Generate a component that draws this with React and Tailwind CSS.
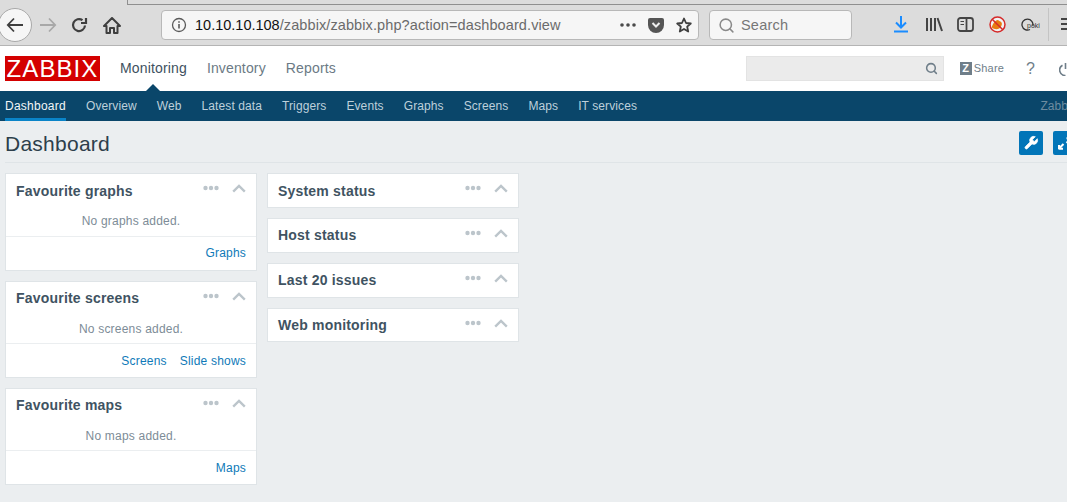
import React from "react";
import { Search } from "lucide-react";

const sans = "font-['Liberation_Sans',Arial,sans-serif]";

function Dots() {
  return (
    <svg width="16" height="6" viewBox="0 0 16 6" className="block">
      <circle cx="2.5" cy="3" r="2.2" fill="#bcc5cb" />
      <circle cx="8" cy="3" r="2.2" fill="#bcc5cb" />
      <circle cx="13.5" cy="3" r="2.2" fill="#bcc5cb" />
    </svg>
  );
}

function Chevron() {
  return (
    <svg width="14" height="9" viewBox="0 0 14 9" className="block">
      <path d="M1.2 7.6 7 2l5.8 5.6" fill="none" stroke="#bcc5cb" strokeWidth="2.4" />
    </svg>
  );
}

function WidgetHead({ title, first, last }) {
  return (
    <div className={`flex items-start justify-between pl-[10px] pr-[10px] ${last ? "h-[32px]" : "h-[33px]"}`}>
      <span className={`${first ? "mt-[9px]" : "mt-[8px]"} text-[14px] leading-[16px] font-bold tracking-[0.2px] text-[#3f5362]`}>{title}</span>
      <span className="mt-[11px] flex items-start gap-[13px]">
        <Dots />
        <span className="-mt-[1px]"><Chevron /></span>
      </span>
    </div>
  );
}

function Widget({ title, empty, links, first, last }) {
  return (
    <section className="border border-[#dfe4e7] bg-white">
      <WidgetHead title={title} first={first} last={last} />
      {empty && (
        <>
          <div className={`flex items-center justify-center text-[12px] tracking-[0.2px] text-[#7d8c97] ${first ? "h-[29px] pb-[2px]" : "h-[28px]"}`}>{empty}</div>
          <div className={`flex h-[34px] items-center justify-end gap-[13px] border-t border-[#ebeef0] pr-[10px] text-[12px] tracking-[0.2px] text-[#0f7ab8] ${first ? "pb-[2px]" : ""}`}>
            {links.map((l) => <span key={l}>{l}</span>)}
          </div>
        </>
      )}
    </section>
  );
}

function BrowserBar() {
  return (
    <div className="flex h-[46px] shrink-0 flex-col border-b border-[#b4b4b4] bg-[#dcdcdc]">
      <div className="ml-[127px] h-[5px] shrink-0 border-b border-l border-[#8f8f8f]" />
      <div className="flex h-[40px] items-start">
        <div className="z-10 -ml-[2px] mt-[3px] flex h-[34px] w-[34px] shrink-0 items-center justify-center rounded-full border border-[#a9a9a9] bg-[#f6f6f6]">
          <svg width="18" height="16" viewBox="0 0 18 16"><path d="M8 1.500 1.800 8 8 14.500M2 8h15" fill="none" stroke="#3f3f3f" strokeWidth="1.800" /></svg>
        </div>
        <svg className="ml-[7px] mt-[12px] shrink-0" width="18" height="16" viewBox="0 0 18 16"><path d="M10 1.500 16.200 8 10 14.500M16 8H1" fill="none" stroke="#a8a8a8" strokeWidth="1.800" /></svg>
        <svg className="ml-[14px] mt-[12px] shrink-0" width="17" height="16" viewBox="0 0 17 16"><path d="M14 8.500A6 6 0 1 1 11.500 3.200M15 1v5h-5" fill="none" stroke="#3f3f3f" strokeWidth="2.200" /></svg>
        <svg className="ml-[15px] mt-[12px] shrink-0" width="18" height="17" viewBox="0 0 18 17"><path d="M9 1 1 9h2.500v7H7v-5h4v5h3.500V9H17z" fill="none" stroke="#3f3f3f" strokeWidth="2" strokeLinejoin="round" /></svg>
        <div className="ml-[40px] mt-[5px] flex h-[30px] w-[538px] shrink-0 items-center rounded-[4px] border border-[#b8b8b8] bg-[#f6f6f6] pl-[9px] pr-[6px]">
          <svg width="16" height="16" viewBox="0 0 16 16" className="shrink-0"><circle cx="8" cy="8" r="6.500" fill="none" stroke="#5a5a5a" strokeWidth="1.300" /><path d="M8 7v4.500M8 4.300v1.500" stroke="#5a5a5a" strokeWidth="1.600" /></svg>
          <span className="ml-[8px] mt-[2px] text-[14.5px] tracking-[0.1px] whitespace-nowrap text-[#6b6b6b]"><span className="tracking-[0px] text-[#111]">10.10.10.108</span>/zabbix/zabbix.php?action=dashboard.view</span>
          <svg className="ml-auto shrink-0" width="16" height="4" viewBox="0 0 16 4"><circle cx="2" cy="2" r="1.800" fill="#4a4a4a" /><circle cx="8" cy="2" r="1.800" fill="#4a4a4a" /><circle cx="14" cy="2" r="1.800" fill="#4a4a4a" /></svg>
          <svg className="ml-[12px] shrink-0" width="16" height="15" viewBox="0 0 16 15"><path d="M2 0h12a2 2 0 0 1 2 2v5A8 8 0 0 1 0 7V2a2 2 0 0 1 2-2z" fill="#555" /><path d="M4.500 5 8 8.500 11.500 5" fill="none" stroke="#eee" strokeWidth="2" /></svg>
          <svg className="ml-[12px] shrink-0" width="16" height="16" viewBox="0 0 16 16"><path d="M8 1.500 10 6l4.800.5-3.600 3.200 1 4.800L8 12l-4.200 2.500 1-4.800L1.200 6.500 6 6z" fill="none" stroke="#3f3f3f" strokeWidth="1.800" strokeLinejoin="round" /></svg>
        </div>
        <div className="ml-[10px] mt-[5px] flex h-[30px] w-[143px] shrink-0 items-center rounded-[4px] border border-[#b8b8b8] bg-[#f6f6f6] pl-[8px]">
          <Search size={17} strokeWidth={2.2} color="#8a8a8a" className="shrink-0" />
          <span className="ml-[6px] mt-[2px] text-[14.5px] tracking-[0.2px] text-[#777]">Search</span>
        </div>
        <svg className="ml-[42px] mt-[11px] shrink-0" width="14" height="17" viewBox="0 0 14 17"><path d="M7 0v11M2 6.500l5 5 5-5" fill="none" stroke="#1a8cff" strokeWidth="2" /><path d="M0 15.500h14" stroke="#1a8cff" strokeWidth="2" /></svg>
        <svg className="ml-[18px] mt-[12px] shrink-0" width="17" height="15" viewBox="0 0 17 15"><path d="M1 1v13M5 1v13M9 1v13M11.500 1l4.500 13" stroke="#444" strokeWidth="2" fill="none" /></svg>
        <svg className="ml-[14px] mt-[12px] shrink-0" width="17" height="15" viewBox="0 0 17 15"><rect x="1" y="1" width="15" height="13" rx="2.500" fill="none" stroke="#444" strokeWidth="1.800" /><path d="M9.500 1v13" stroke="#444" strokeWidth="1.800" /><path d="M3.500 4.500h3.500M3.500 7.500h3.500" stroke="#444" strokeWidth="1.200" /></svg>
        <svg className="ml-[15px] mt-[11px] shrink-0" width="17" height="17" viewBox="0 0 17 17"><circle cx="8.500" cy="8.500" r="7.500" fill="#f2f2f2" stroke="#d52b2b" strokeWidth="1.500" /><path d="M2.800 11.500c.5-3 3-7 6-7.500 1 1 3 1 4 3 .5 2-1 4-2.500 5.500-3 1.500-5.500 .5-7.500-1z" fill="#e87b12" /><path d="M3.200 3.200l10.600 10.600" stroke="#d52b2b" strokeWidth="1.500" /></svg>
        <div className="relative ml-[15px] mt-[13px] h-[12px] w-[18px] shrink-0">
          <svg width="13" height="13" viewBox="0 0 13 13" className="block"><path d="M9 11.500A5.500 5.500 0 1 1 11.800 8" fill="none" stroke="#333" strokeWidth="1.300" /></svg>
          <span className={`absolute top-[4px] left-[6px] text-[7px] leading-[8px] text-[#333] ${sans}`}>poki</span>
        </div>
        <div className="ml-[9px] mt-[3px] h-[33px] w-px shrink-0 bg-[#c4c4c4]" />
        <svg className="ml-[12px] mt-[13px] shrink-0" width="6" height="12" viewBox="0 0 6 12"><path d="M0 1h6M0 6h6M0 11h6" stroke="#444" strokeWidth="2" /></svg>
      </div>
    </div>
  );
}

function Header() {
  return (
    <header className="flex h-[45px] shrink-0 items-center bg-white">
      <div className="ml-[5px] mt-[-1px] flex h-[25px] w-[95px] items-center justify-center bg-[#d40000] text-[24px] leading-[25px] tracking-[1.1px] text-white">ZABBIX</div>
      <nav className="relative ml-[20px] flex gap-[20px] text-[14px] tracking-[0.15px] text-[#6b7a85]">
        <span className="text-[#3e5160]">Monitoring</span>
        <span>Inventory</span>
        <span>Reports</span>
      </nav>
      <div className="ml-auto mt-[-1px] flex h-[25px] w-[198px] items-center justify-end border border-[#e3e3e3] bg-[#ebebeb] pr-[5px]">
        <Search size={13} strokeWidth={2.8} color="#6f7e89" />
      </div>
      <div className="ml-[16px] flex h-[13px] w-[12px] shrink-0 items-center justify-center bg-[#6f7e89] text-[11px] leading-[13px] font-bold text-white">Z</div>
      <span className="ml-[2px] text-[11px] tracking-[0.2px] text-[#6f7e89]">Share</span>
      <span className="ml-[22px] text-[16px] text-[#6f7e89]">?</span>
      <svg className="ml-[24px] shrink-0" width="8" height="14" viewBox="0 0 8 14"><path d="M6.500 1v6" stroke="#6f7e89" strokeWidth="1.600" /><path d="M3.500 3.200A5.500 5.500 0 0 0 6.500 13.500" fill="none" stroke="#6f7e89" strokeWidth="1.600" /></svg>
    </header>
  );
}

const sub = ["Overview", "Web", "Latest data", "Triggers", "Events", "Graphs", "Screens", "Maps", "IT services"];

function SubNav() {
  return (
    <div className="relative flex h-[30px] shrink-0 items-center gap-[20px] bg-[#0a466a] pl-[5px] text-[12px] tracking-[0.1px] text-[#bed0db]">
      <span className="absolute -top-[7px] left-[146px] h-0 w-0 border-x-[7px] border-b-[7px] border-x-transparent border-b-[#0a466a]" />
      <span className="flex h-[30px] items-center border-b-[3px] border-[#0a84c8] pt-[3px] tracking-[0.25px] text-[#f2f6f8]">Dashboard</span>
      {sub.map((s) => <span key={s}>{s}</span>)}
      <span className="ml-auto -mr-[10px] text-[#6d8ca0]">Zabbix</span>
    </div>
  );
}

export default function App() {
  return (
    <div className={`flex h-[502px] w-[1067px] flex-col overflow-hidden bg-[#ebeef0] ${sans}`}>
      <BrowserBar />
      <Header />
      <SubNav />
      <main className="flex min-h-0 flex-1 flex-col pl-[5px]">
        <div className="flex h-[42px] shrink-0 items-center border-b border-[#dfe4e7]">
          <h1 className="mt-[5px] text-[21px] tracking-[0.25px] text-[#2d3e4b]">Dashboard</h1>
          <div className="ml-auto flex gap-[10px]">
            <button className="mt-[3px] flex h-[24px] w-[24px] shrink-0 items-center justify-center rounded-[2px] bg-[#0275b8]">
              <svg width="16" height="16" viewBox="0 0 24 24"><path d="M14.700 6.300a1 1 0 0 0 0 1.400l1.600 1.600a1 1 0 0 0 1.400 0l3.770-3.770a6 6 0 0 1-7.940 7.940l-6.910 6.910a2.120 2.120 0 0 1-3-3l6.910-6.910a6 6 0 0 1 7.940-7.940l-3.760 3.760z" fill="#fff" stroke="#fff" strokeWidth="1" /></svg>
            </button>
            <button className="-mr-[10px] mt-[3px] flex h-[24px] w-[24px] shrink-0 items-start justify-start rounded-[2px] bg-[#0275b8] pl-[5px] pt-[6px]">
              <svg width="14" height="13" viewBox="0 0 14 13"><path d="M1 12V8M.500 11.800h4.500M1.500 11 5.500 7" stroke="#fff" strokeWidth="2" fill="none" /><path d="M13 1v4M8.500 1.200H13.500M12.500 2 8.500 6" stroke="#fff" strokeWidth="2" fill="none" /></svg>
            </button>
          </div>
        </div>
        <div className="mt-[10px] flex gap-[10px]">
          <div className="flex w-[252px] flex-col gap-[10px]">
            <Widget first title="Favourite graphs" empty="No graphs added." links={["Graphs"]} />
            <Widget title="Favourite screens" empty="No screens added." links={["Screens", "Slide shows"]} />
            <Widget title="Favourite maps" empty="No maps added." links={["Maps"]} />
          </div>
          <div className="flex w-[252px] flex-col gap-[10px] self-start">
            <Widget first title="System status" />
            <Widget title="Host status" />
            <Widget title="Last 20 issues" />
            <Widget last title="Web monitoring" />
          </div>
        </div>
      </main>
    </div>
  );
}
